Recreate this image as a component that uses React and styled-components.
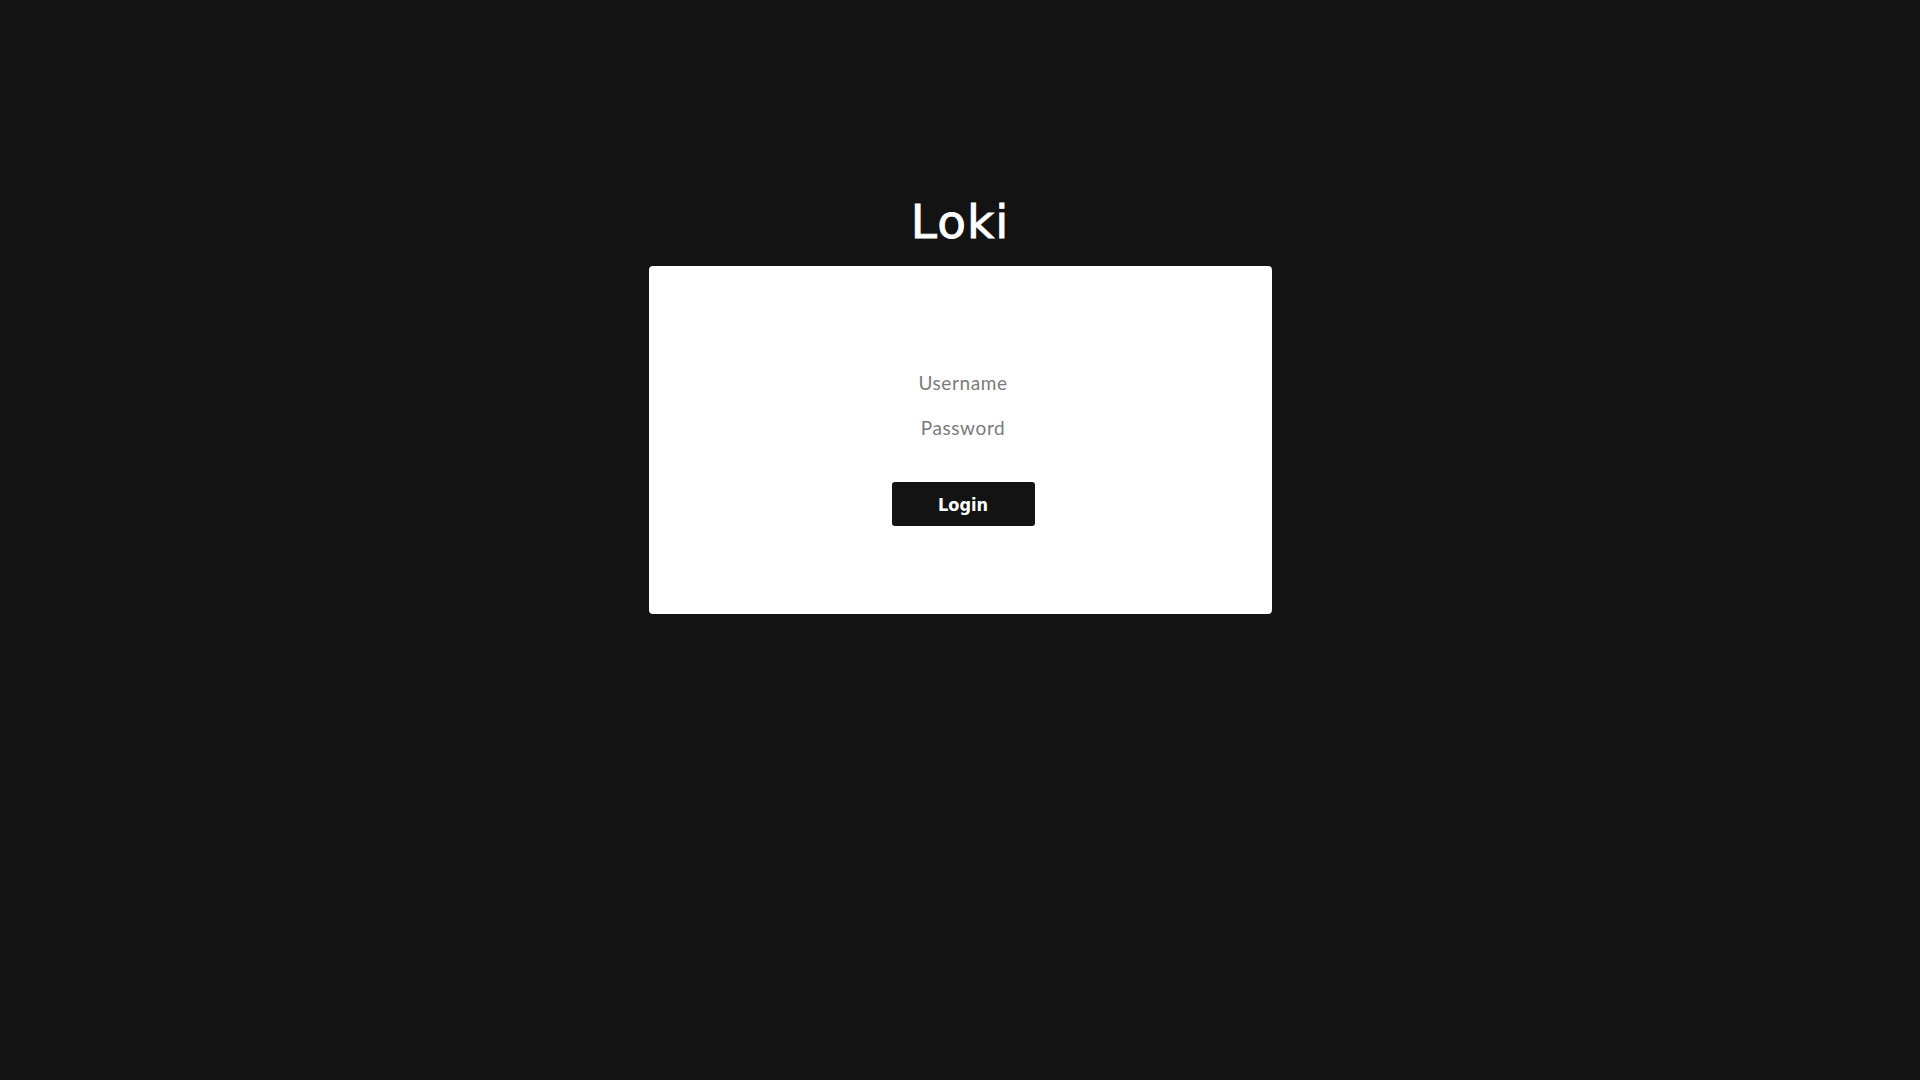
import React from "react";
import styled, { createGlobalStyle } from "styled-components";

const Global = createGlobalStyle`
  html, body { margin: 0; padding: 0; background: #131313; }
  body { font-family: Lato, "Noto Sans", sans-serif; }
`;

const Page = styled.main`
  min-height: 100vh;
  box-sizing: border-box;
  padding-top: 198px;
  display: flex;
  flex-direction: column;
  align-items: center;
`;

const Title = styled.h1`
  margin: 0 0 21px;
  font-family: "DejaVu Sans", sans-serif;
  font-weight: 400;
  font-size: 47px;
  line-height: 47px;
  color: #ffffff;
  -webkit-text-stroke: 0.9px #ffffff;
  letter-spacing: 1px;
`;

const Card = styled.form`
  width: 623px;
  height: 348px;
  box-sizing: border-box;
  background: #ffffff;
  border-radius: 4px;
  padding: 105px 0 0 6px;
  display: flex;
  flex-direction: column;
  align-items: center;
`;

const Field = styled.input`
  width: 220px;
  height: 24px;
  padding: 0;
  margin: 0 0 ${(p) => p.$gap}px;
  border: none;
  outline: none;
  background: transparent;
  text-align: center;
  font-family: Lato, "Noto Sans", sans-serif;
  font-size: 19px;
  line-height: 24px;
  letter-spacing: 0.6px;
  color: #333;
  &::placeholder { color: #7b7b7b; }
`;

const Button = styled.button`
  width: 143px;
  height: 44px;
  border: none;
  border-radius: 3px;
  background: #131313;
  color: #ffffff;
  font-family: "DejaVu Sans Condensed", "DejaVu Sans", sans-serif;
  font-weight: 700;
  font-size: 18px;
  line-height: 21px;
  padding: 0;
  cursor: pointer;
`;

export default function App() {
  return (
    <>
      <Global />
      <Page>
        <Title>Loki</Title>
        <Card onSubmit={(e) => e.preventDefault()}>
          <Field type="text" placeholder="Username" $gap={21} />
          <Field type="password" placeholder="Password" $gap={42} />
          <Button type="submit">Login</Button>
        </Card>
      </Page>
    </>
  );
}
